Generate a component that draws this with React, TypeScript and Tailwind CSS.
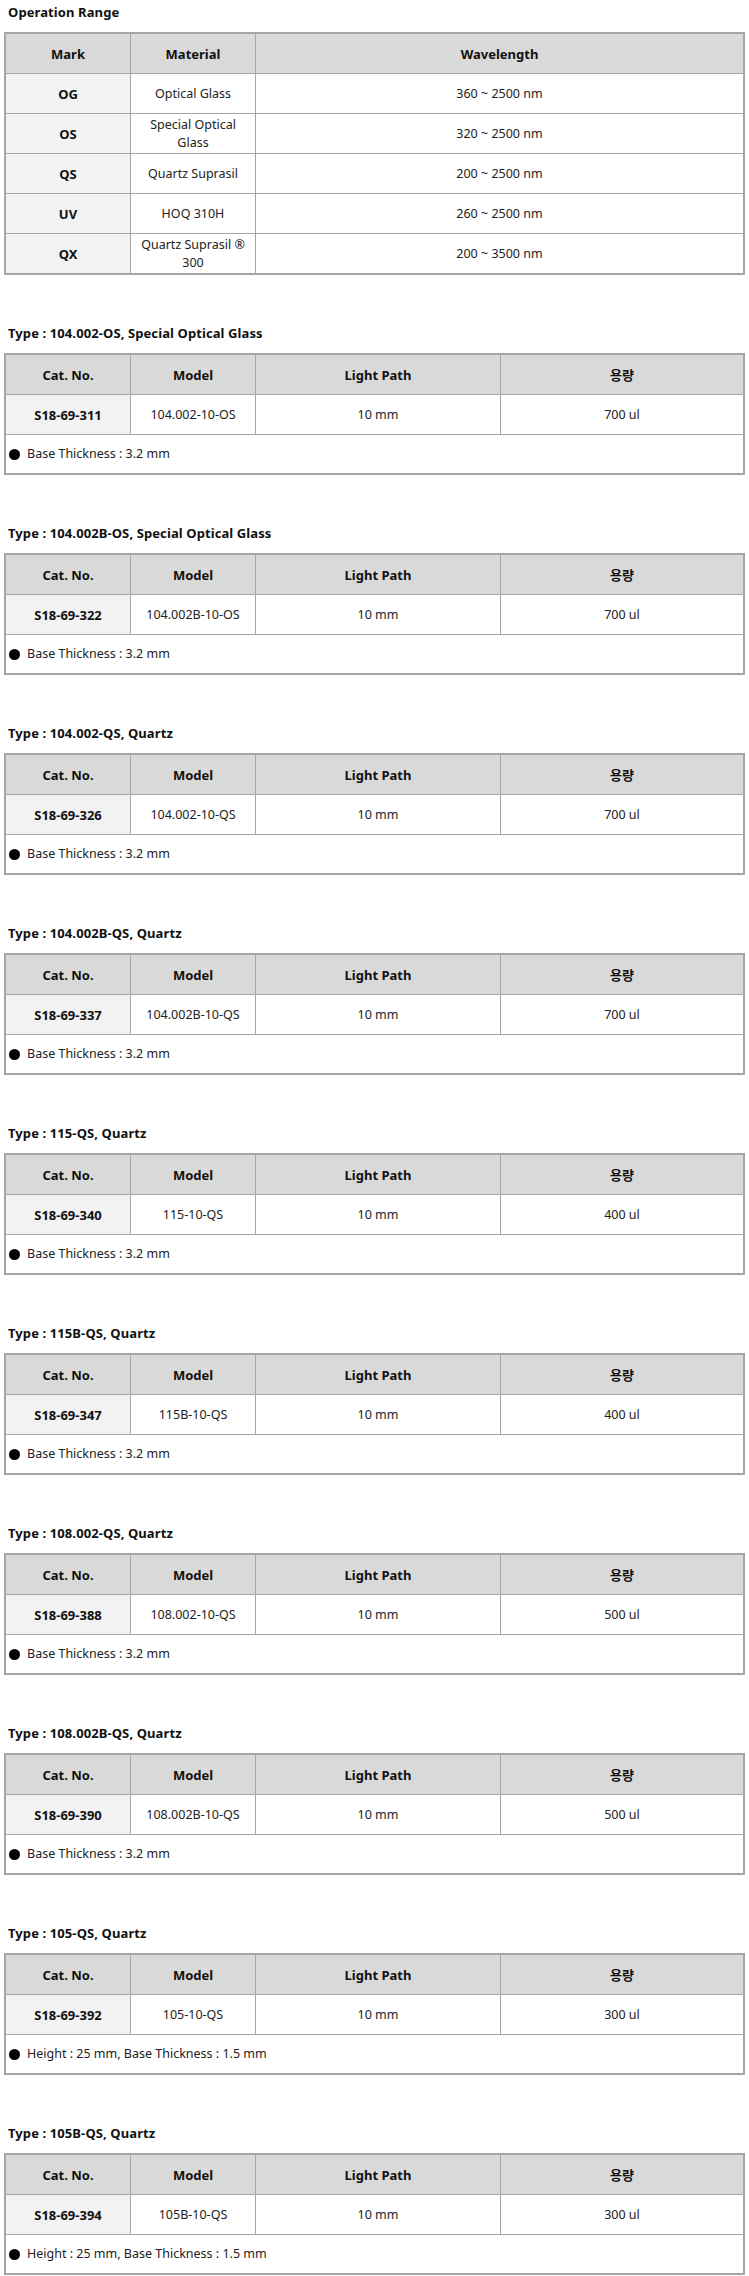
import React from "react";

const FONT = { fontFamily: '"Noto Sans", "Noto Sans CJK KR", sans-serif' };

type Item = {
  type: string;
  cat: string;
  model: string;
  path: string;
  vol: string;
  note: string;
};

const items: Item[] = [
  { type: "104.002-OS, Special Optical Glass", cat: "S18-69-311", model: "104.002-10-OS", path: "10 mm", vol: "700 ul", note: "Base Thickness : 3.2 mm" },
  { type: "104.002B-OS, Special Optical Glass", cat: "S18-69-322", model: "104.002B-10-OS", path: "10 mm", vol: "700 ul", note: "Base Thickness : 3.2 mm" },
  { type: "104.002-QS, Quartz", cat: "S18-69-326", model: "104.002-10-QS", path: "10 mm", vol: "700 ul", note: "Base Thickness : 3.2 mm" },
  { type: "104.002B-QS, Quartz", cat: "S18-69-337", model: "104.002B-10-QS", path: "10 mm", vol: "700 ul", note: "Base Thickness : 3.2 mm" },
  { type: "115-QS, Quartz", cat: "S18-69-340", model: "115-10-QS", path: "10 mm", vol: "400 ul", note: "Base Thickness : 3.2 mm" },
  { type: "115B-QS, Quartz", cat: "S18-69-347", model: "115B-10-QS", path: "10 mm", vol: "400 ul", note: "Base Thickness : 3.2 mm" },
  { type: "108.002-QS, Quartz", cat: "S18-69-388", model: "108.002-10-QS", path: "10 mm", vol: "500 ul", note: "Base Thickness : 3.2 mm" },
  { type: "108.002B-QS, Quartz", cat: "S18-69-390", model: "108.002B-10-QS", path: "10 mm", vol: "500 ul", note: "Base Thickness : 3.2 mm" },
  { type: "105-QS, Quartz", cat: "S18-69-392", model: "105-10-QS", path: "10 mm", vol: "300 ul", note: "Height : 25 mm, Base Thickness : 1.5 mm" },
  { type: "105B-QS, Quartz", cat: "S18-69-394", model: "105B-10-QS", path: "10 mm", vol: "300 ul", note: "Height : 25 mm, Base Thickness : 1.5 mm" },
];

const ranges = [
  { mark: "OG", mat: ["Optical Glass"], wl: "360 ~ 2500 nm" },
  { mark: "OS", mat: ["Special Optical", "Glass"], wl: "320 ~ 2500 nm" },
  { mark: "QS", mat: ["Quartz Suprasil"], wl: "200 ~ 2500 nm" },
  { mark: "UV", mat: ["HOQ 310H"], wl: "260 ~ 2500 nm" },
  { mark: "QX", mat: ["Quartz Suprasil ®", "300"], wl: "200 ~ 3500 nm" },
];

function Title({ children }: { children: React.ReactNode }) {
  return (
    <div className="h-[24px] mb-[8px] pl-[4px] flex items-center text-[13px] font-bold text-[#111] leading-none tracking-[0.1px]">
      {children}
    </div>
  );
}

const cellBase = "flex items-center justify-center text-center leading-[18px] border-r border-[#a6a6a6]";

function RangeTable() {
  return (
    <div className="border-2 border-[#a6a6a6]">
      <div className="grid grid-cols-[125px_125px_1fr] h-[40px] bg-[#d9d9d9] border-b border-[#a6a6a6] font-bold text-[#111] text-[13px]">
        <div className={cellBase}>Mark</div>
        <div className={cellBase}>Material</div>
        <div className={cellBase + " border-r-0"}>Wavelength</div>
      </div>
      {ranges.map((r, i) => (
        <div
          key={r.mark}
          className={
            "grid grid-cols-[125px_125px_1fr] text-[#222] text-[12.5px] " +
            (i < ranges.length - 1 ? "h-[40px] border-b border-[#a6a6a6]" : "h-[39px]")
          }
        >
          <div className={cellBase + " bg-[#f2f2f2] font-bold text-[#111] text-[13px]"}>{r.mark}</div>
          <div className={cellBase + " flex-col"}>
            {r.mat.map((m) => (
              <span key={m}>{m}</span>
            ))}
          </div>
          <div className={cellBase + " border-r-0"}>{r.wl}</div>
        </div>
      ))}
    </div>
  );
}

function ItemTable({ it }: { it: Item }) {
  return (
    <div className="border-2 border-[#a6a6a6]">
      <div className="grid grid-cols-[125px_125px_245px_1fr] h-[40px] bg-[#d9d9d9] border-b border-[#a6a6a6] font-bold text-[#111] text-[13px]">
        <div className={cellBase}>Cat. No.</div>
        <div className={cellBase}>Model</div>
        <div className={cellBase}>Light Path</div>
        <div className={cellBase + " border-r-0"}>용량</div>
      </div>
      <div className="grid grid-cols-[125px_125px_245px_1fr] h-[40px] border-b border-[#a6a6a6] text-[#222] text-[12.5px]">
        <div className={cellBase + " bg-[#f2f2f2] font-bold text-[#111] text-[13px]"}>{it.cat}</div>
        <div className={cellBase}>{it.model}</div>
        <div className={cellBase}>{it.path}</div>
        <div className={cellBase + " border-r-0"}>{it.vol}</div>
      </div>
      <div className="h-[38px] flex items-center pl-[3px] text-[12.5px] text-[#222]">
        <span className="inline-block w-[11px] h-[11px] rounded-full bg-black mr-[7px]" />
        <span>{it.note}</span>
      </div>
    </div>
  );
}

export default function App() {
  return (
    <div className="bg-white w-[749px] min-h-[2276px] px-[4px] pb-[2px]" style={FONT}>
      <Title>Operation Range</Title>
      <RangeTable />
      {items.map((it) => (
        <div key={it.cat} className="mt-[46px]">
          <Title>Type : {it.type}</Title>
          <ItemTable it={it} />
        </div>
      ))}
    </div>
  );
}
